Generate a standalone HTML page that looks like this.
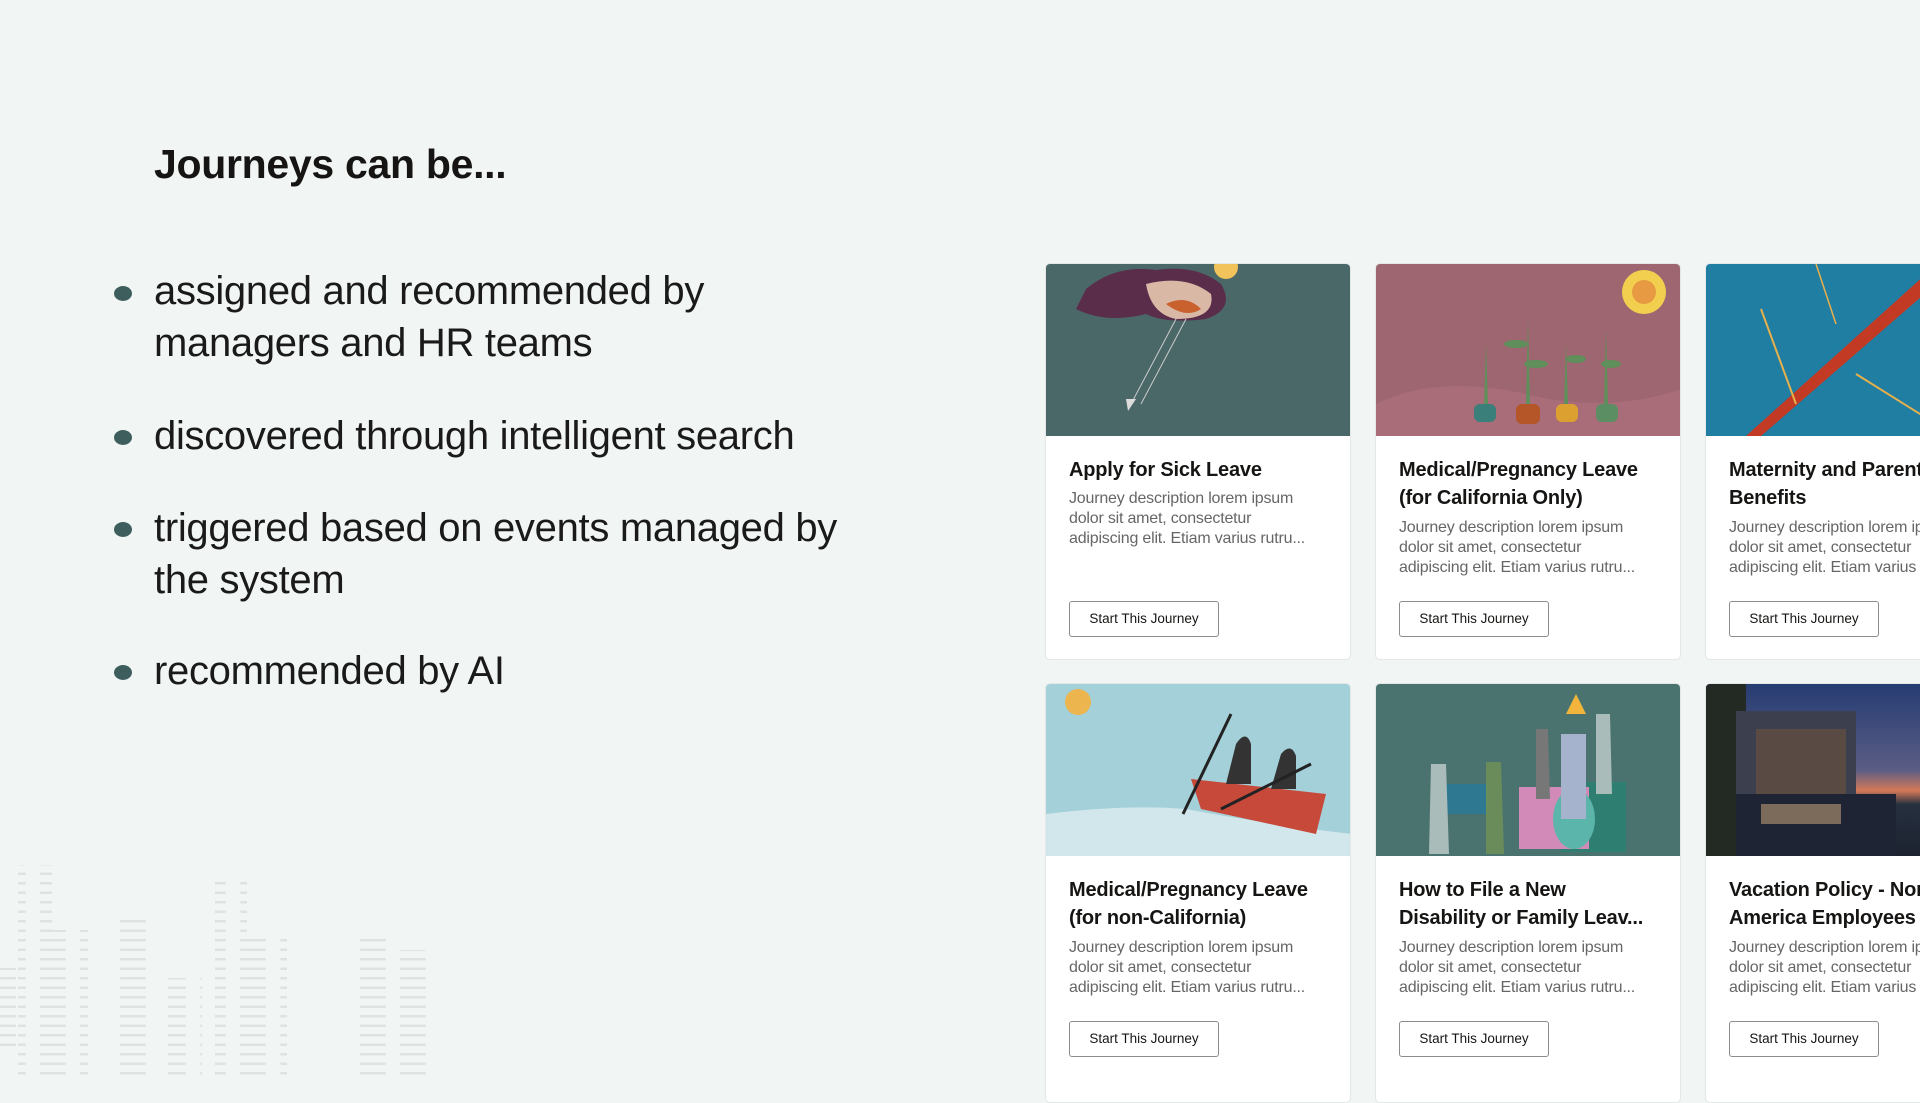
<!DOCTYPE html>
<html><head><meta charset="utf-8"><style>
*{margin:0;padding:0;box-sizing:border-box}
body{width:1920px;height:1080px;overflow:hidden;background:#f1f5f4;font-family:"Liberation Sans",sans-serif;position:relative;color:#161513}
h1{position:absolute;left:154px;top:141px;font-size:41px;font-weight:bold;letter-spacing:-0.3px;white-space:nowrap}
.b{position:absolute;left:154px;font-size:40px;line-height:52px;font-weight:300;color:#1a1a1a;letter-spacing:-0.3px;white-space:nowrap}
.dot{position:absolute;left:114px;width:18px;height:15px;border-radius:50%;background:#3e5e5e}
.card{position:absolute;width:306px;background:#fff;border:1px solid #e3e7e6;border-radius:5px;overflow:hidden}
.img{height:172px;position:relative;overflow:hidden}
.t{position:absolute;left:23px;font-size:20px;font-weight:bold;line-height:28px;letter-spacing:-0.2px;white-space:nowrap}
.d{position:absolute;left:23px;font-size:16px;line-height:20px;color:#666;white-space:nowrap;letter-spacing:-0.2px}
.btn{position:absolute;left:23px;width:150px;height:36px;border:1px solid #8c8c8c;border-radius:3px;font-size:13.5px;line-height:34px;text-align:center;color:#161513}
</style></head><body>
<svg style="position:absolute;left:0;top:850px" width="480" height="230">
<defs><pattern id="p" width="40" height="9.5" patternUnits="userSpaceOnUse"><rect x="0" y="3.5" width="26" height="2.5" rx="1.2" fill="#e0e2e0"/></pattern></defs>
<rect x="18" y="15" width="34" height="215" fill="url(#p)"/>
<rect x="0" y="118" width="16" height="80" fill="url(#p)"/>
<rect x="52" y="80" width="36" height="150" fill="url(#p)"/>
<rect x="115" y="70" width="32" height="160" fill="url(#p)"/>
<rect x="168" y="128" width="34" height="102" fill="url(#p)"/>
<rect x="215" y="25" width="32" height="205" fill="url(#p)"/>
<rect x="245" y="88" width="42" height="142" fill="url(#p)"/>
<rect x="352" y="88" width="36" height="142" fill="url(#p)"/>
<rect x="398" y="100" width="42" height="130" fill="url(#p)"/>
</svg>
<h1>Journeys can be...</h1>
<div class="dot" style="top:286px"></div>
<div class="b" style="top:265px">assigned and recommended by<br>managers and HR teams</div>
<div class="dot" style="top:430px"></div>
<div class="b" style="top:410px">discovered through intelligent search</div>
<div class="dot" style="top:522px"></div>
<div class="b" style="top:502px">triggered based on events managed by<br>the system</div>
<div class="dot" style="top:665px"></div>
<div class="b" style="top:645px">recommended by AI</div>

<!-- row 1 -->
<div class="card" style="left:1045px;top:263px;height:397px">
<div class="img" style="background:#4a6868">
<svg width="306" height="172"><path d="M40 25 Q70 0 110 6 Q150 0 175 20 Q190 45 160 55 Q120 60 100 50 Q60 60 30 45 Z" fill="#5a2d4a"/><path d="M100 20 Q140 10 165 30 Q170 55 130 55 Q105 50 100 20Z" fill="#d9b8a6"/><path d="M120 40 Q140 30 155 45 Q140 55 120 40Z" fill="#c8612e"/><circle cx="180" cy="3" r="12" fill="#f2c35a"/><path d="M130 55 L85 140" stroke="#ccc" stroke-width="1"/><path d="M140 55 L95 140" stroke="#ccc"/><path d="M80 135 l10 0 l-8 12 z" fill="#ddd"/></svg></div>
<div class="t" style="top:192px">Apply for Sick Leave</div>
<div class="d" style="top:225px">Journey description lorem ipsum<br>dolor sit amet, consectetur<br>adipiscing elit. Etiam varius rutru...</div>
<div class="btn" style="top:337px">Start This Journey</div>
</div>
<div class="card" style="left:1375px;top:263px;height:397px">
<div class="img" style="background:#9e6670">
<svg width="306" height="172"><path d="M0 140 Q60 110 150 130 Q230 150 306 125 L306 172 L0 172Z" fill="#a86d78"/><circle cx="268" cy="28" r="22" fill="#f3cf4f"/><circle cx="268" cy="28" r="12" fill="#e89a42"/>
<g fill="#5f8f5a"><path d="M108 140 l2 -60 l2 60z"/><path d="M150 140 l2 -85 l2 85z"/><path d="M188 140 l2 -60 l2 60z"/><path d="M228 140 l2 -75 l2 75z"/><ellipse cx="140" cy="80" rx="12" ry="4"/><ellipse cx="160" cy="100" rx="12" ry="4"/><ellipse cx="200" cy="95" rx="10" ry="4"/><ellipse cx="235" cy="100" rx="10" ry="4"/></g>
<rect x="98" y="140" width="22" height="18" rx="6" fill="#3b7f7b"/><rect x="140" y="140" width="24" height="20" rx="6" fill="#b55628"/><rect x="180" y="140" width="22" height="18" rx="6" fill="#dba030"/><rect x="220" y="140" width="22" height="18" rx="6" fill="#5c8e63"/></svg></div>
<div class="t" style="top:192px">Medical/Pregnancy Leave<br>(for California Only)</div>
<div class="d" style="top:254px">Journey description lorem ipsum<br>dolor sit amet, consectetur<br>adipiscing elit. Etiam varius rutru...</div>
<div class="btn" style="top:337px">Start This Journey</div>
</div>
<div class="card" style="left:1705px;top:263px;height:397px;width:230px">
<div class="img" style="background:#1f7ea2">
<svg width="306" height="172"><path d="M40 172 L220 10 L230 20 L55 172Z" fill="#c23a24"/><path d="M55 45 L90 140" stroke="#e8b04a" stroke-width="2"/><path d="M150 110 L230 160" stroke="#e8b04a" stroke-width="2"/><path d="M110 0 L130 60" stroke="#e8b04a" stroke-width="1.5"/></svg></div>
<div class="t" style="top:192px">Maternity and Parental<br>Benefits</div>
<div class="d" style="top:254px">Journey description lorem ipsum<br>dolor sit amet, consectetur<br>adipiscing elit. Etiam varius rutru...</div>
<div class="btn" style="top:337px">Start This Journey</div>
</div>

<!-- row 2 -->
<div class="card" style="left:1045px;top:683px;height:420px">
<div class="img" style="background:#a4d0d9">
<svg width="306" height="172"><circle cx="32" cy="18" r="13" fill="#ecb54e"/><path d="M0 130 Q80 120 140 125 Q220 140 306 150 L306 172 L0 172Z" fill="#e6f1f3" opacity=".7"/><path d="M145 95 L280 110 L270 150 L155 125Z" fill="#c6493a"/><path d="M190 60 Q200 45 205 60 L205 100 L180 100Z" fill="#333"/><path d="M235 70 Q245 58 250 72 L250 105 L225 105Z" fill="#333"/><path d="M137 130 L185 30" stroke="#222" stroke-width="3"/><path d="M175 125 L265 80" stroke="#222" stroke-width="3"/></svg></div>
<div class="t" style="top:192px">Medical/Pregnancy Leave<br>(for non-California)</div>
<div class="d" style="top:254px">Journey description lorem ipsum<br>dolor sit amet, consectetur<br>adipiscing elit. Etiam varius rutru...</div>
<div class="btn" style="top:337px">Start This Journey</div>
</div>
<div class="card" style="left:1375px;top:683px;height:420px">
<div class="img" style="background:#4a7370">
<svg width="306" height="172"><rect x="185" y="98" width="65" height="70" fill="#2e7f72"/><rect x="143" y="103" width="70" height="62" fill="#d28bb8"/><ellipse cx="198" cy="135" rx="21" ry="30" fill="#5cb5aa"/><rect x="185" y="50" width="25" height="85" fill="#a6b3cc"/><path d="M190 30 L200 10 L210 30Z" fill="#f2b43a"/><rect x="70" y="100" width="52" height="30" fill="#2f7891"/><path d="M55 80 l15 0 l3 90 l-20 0z" fill="#a9bcb9"/><path d="M110 78 l15 0 l3 92 l-18 0z" fill="#6a8c5b"/><path d="M160 45 l12 0 l2 70 l-14 0z" fill="#777"/><path d="M220 30 l14 0 l2 80 l-16 0z" fill="#a9bcb9"/></svg></div>
<div class="t" style="top:192px">How to File a New<br>Disability or Family Leav...</div>
<div class="d" style="top:254px">Journey description lorem ipsum<br>dolor sit amet, consectetur<br>adipiscing elit. Etiam varius rutru...</div>
<div class="btn" style="top:337px">Start This Journey</div>
</div>
<div class="card" style="left:1705px;top:683px;height:420px;width:230px">
<div class="img" style="background:linear-gradient(180deg,#263c72 0%,#5a5d85 50%,#d57a58 62%,#26303f 70%,#1c2230 100%)">
<svg width="306" height="172"><rect x="0" y="0" width="40" height="172" fill="#232a24"/><rect x="30" y="27" width="120" height="95" fill="#3b3f4e"/><rect x="50" y="45" width="90" height="70" fill="#5a4a44"/><rect x="30" y="110" width="160" height="62" fill="#1e2433"/><rect x="55" y="120" width="80" height="20" fill="#7c6a5a"/></svg></div>
<div class="t" style="top:192px">Vacation Policy - North<br>America Employees</div>
<div class="d" style="top:254px">Journey description lorem ipsum<br>dolor sit amet, consectetur<br>adipiscing elit. Etiam varius rutru...</div>
<div class="btn" style="top:337px">Start This Journey</div>
</div>
</body></html>
